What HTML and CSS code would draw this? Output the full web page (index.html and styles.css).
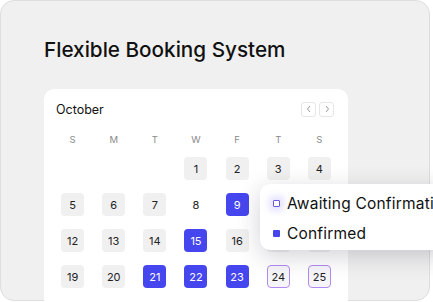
FILE: index.html
```html
<!DOCTYPE html>
<html lang="en">

<head>
  <meta charset="UTF-8">
  <meta name="viewport" content="width=device-width, initial-scale=1.0">
  <title>Flexible Booking System</title>
  <link rel="stylesheet" href="styles.css">
</head>

<body>
  <div class="frame">
    <h1 class="title">Flexible Booking System</h1>

    <div class="calendar">
      <div class="cal-header">
        <span class="month">October</span>
        <div class="nav">
          <button class="nav-btn">
            <svg width="6" height="8" viewBox="0 0 6 8"><polyline points="4,1 1.5,4 4,7" fill="none" stroke="#999" stroke-width="1"/></svg>
          </button>
          <button class="nav-btn">
            <svg width="6" height="8" viewBox="0 0 6 8"><polyline points="2,1 4.5,4 2,7" fill="none" stroke="#999" stroke-width="1"/></svg>
          </button>
        </div>
      </div>

      <div class="weekdays">
        <span>S</span><span>M</span><span>T</span><span>W</span><span>F</span><span>T</span><span>S</span>
      </div>

      <div class="days">
        <span></span><span></span><span></span>
        <span class="day">1</span><span class="day">2</span><span class="day">3</span><span class="day">4</span>

        <span class="day">5</span><span class="day">6</span><span class="day">7</span>
        <span class="day plain">8</span><span class="day booked">9</span><span class="day">10</span><span class="day">11</span>

        <span class="day">12</span><span class="day">13</span><span class="day">14</span>
        <span class="day booked">15</span><span class="day">16</span><span class="day">17</span><span class="day">18</span>

        <span class="day">19</span><span class="day">20</span><span class="day booked">21</span>
        <span class="day booked">22</span><span class="day booked">23</span><span class="day pending">24</span><span class="day pending">25</span>
      </div>
    </div>

    <div class="legend">
      <div class="legend-item">
        <span class="mark mark-pending"></span>
        <span>Awaiting Confirmation</span>
      </div>
      <div class="legend-item">
        <span class="mark mark-booked"></span>
        <span>Confirmed</span>
      </div>
    </div>
  </div>
</body>

</html>
```

FILE: styles.css
```css
html,
body {
  margin: 0;
  padding: 0;
  overflow: hidden;
  background-color: #ffffff;
}

body {
  font-family: 'Inter', 'Lato', sans-serif;
  color: #111111;
  width: 433px;
  height: 302px;
}

.frame {
  position: relative;
  width: 430px;
  height: 301px;
  background-color: #f0f0f0;
  border: 1px solid #dedede;
  border-radius: 14px;
  padding: 0 0 0 43px;
  box-sizing: border-box;
}

.title {
  margin: 0;
  padding-top: 36px;
  font-size: 20.7px;
  font-weight: 500;
  line-height: 26px;
}

.calendar {
  margin-top: 26px;
  width: 304px;
  height: 214px;
  background-color: #ffffff;
  border-radius: 10px 10px 0 0;
  padding: 12px 8px 0 8px;
  box-sizing: border-box;
}

.cal-header {
  display: flex;
  justify-content: space-between;
  align-items: center;
  height: 16px;
  padding: 0 6px 0 4px;
}

.month {
  font-size: 12.5px;
}

.nav {
  display: flex;
  gap: 3px;
}

.nav-btn {
  width: 15px;
  height: 15px;
  padding: 0;
  border: 1px solid #e6e6e6;
  border-radius: 3px;
  background-color: #ffffff;
  display: flex;
  align-items: center;
  justify-content: center;
}

.weekdays {
  display: grid;
  grid-template-columns: repeat(7, 1fr);
  margin-top: 16px;
  height: 14px;
  line-height: 14px;
  font-size: 9.5px;
  color: #8a8a8a;
  text-align: center;
}

.days {
  display: grid;
  grid-template-columns: repeat(7, 1fr);
  row-gap: 13px;
  margin-top: 10px;
  justify-items: center;
}

.day {
  width: 23px;
  height: 23px;
  border-radius: 4px;
  background-color: #f0f0f0;
  font-size: 11px;
  display: flex;
  align-items: center;
  justify-content: center;
  box-sizing: border-box;
  color: #222222;
}

.day.plain {
  background-color: transparent;
}

.day.booked {
  background-color: #4646ee;
  color: #ffffff;
}

.day.pending {
  background-color: #f6f5fa;
  border: 1px solid #b38af2;
}

.legend {
  position: absolute;
  left: 259px;
  top: 183px;
  width: 200px;
  height: 66px;
  background-color: #ffffff;
  border-radius: 10px;
  box-shadow: 0 6px 24px rgba(30, 30, 60, 0.2);
  padding: 8px 0 0 13px;
  box-sizing: border-box;
  font-size: 15.5px;
  font-weight: 400;
  letter-spacing: 0.2px;
  white-space: nowrap;
}

.legend-item {
  display: flex;
  align-items: center;
  gap: 7px;
  height: 22px;
  margin-bottom: 8px;
}

.mark {
  width: 7px;
  height: 7px;
  box-sizing: border-box;
  border-radius: 1px;
  flex-shrink: 0;
}

.mark-pending {
  border: 1.5px solid #6a5ad8;
  box-shadow: 0 0 6px 4px rgba(150, 140, 255, 0.25);
}

.mark-booked {
  background-color: #4646ee;
}
```
